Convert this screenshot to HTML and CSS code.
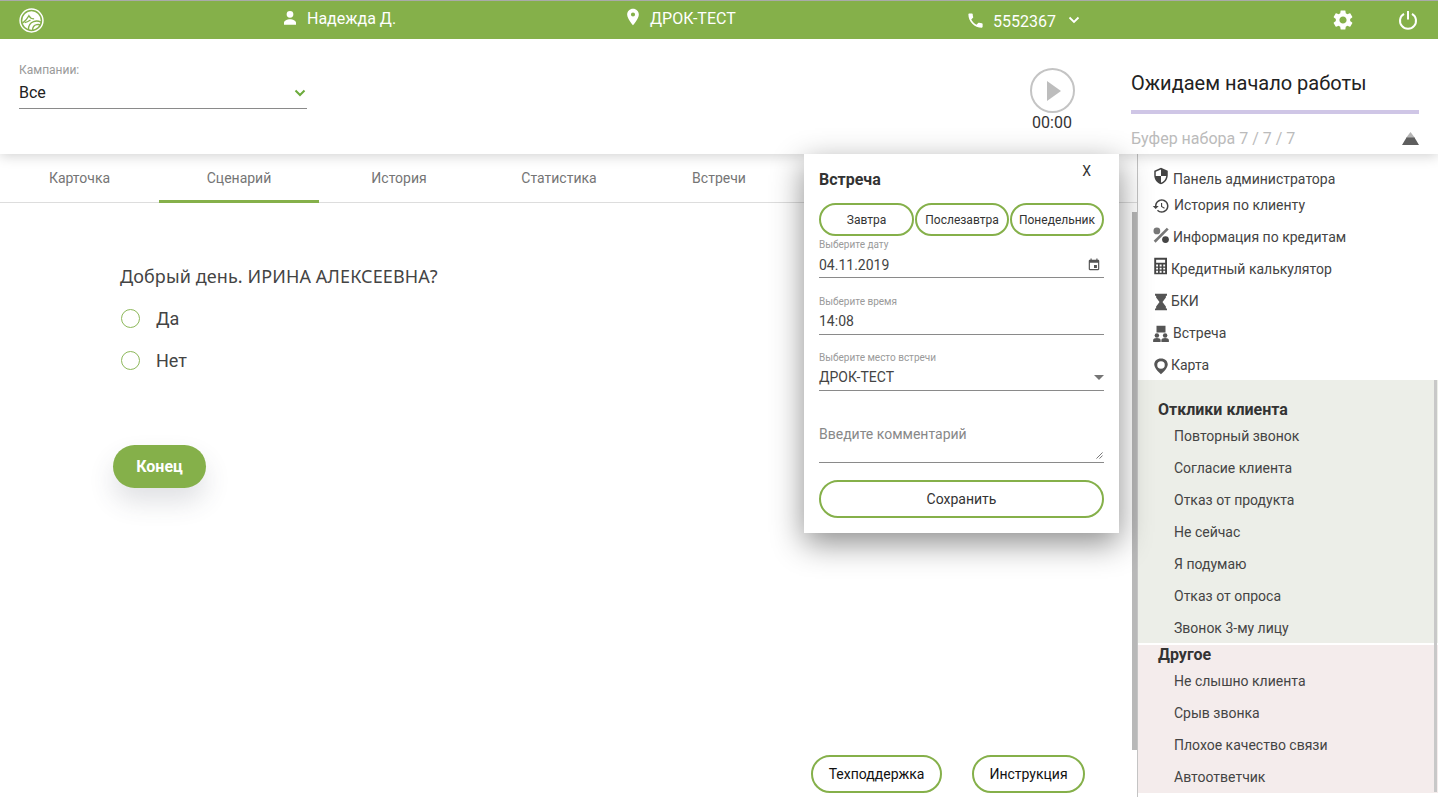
FILE: index.html
```html
<!DOCTYPE html>
<html lang="ru">
<head>
  <meta charset="UTF-8" />
  <title>Встреча</title>
  <link rel="stylesheet" href="styles.css">
</head>
<body>
  <header class="topbar">
    <div class="topbar-cell logo-cell">
      <svg class="logo" viewBox="0 0 24 24">
        <circle cx="12" cy="12" r="11" fill="none" stroke="#fff" stroke-width="1.4"/>
        <circle cx="12" cy="12" r="8.8" fill="#fff"/>
        <path d="M3.500 14.500c3-2.500 5-5 6-7 1 2 3 3 5 3M9 21c0-4 2-7 5-8 2.500-.8 5-.5 7 .5M13 21.500c0-3 1.500-5 4-5.500 1.500-.3 3 0 3.500.8M11 11.500c-1.500 1-3 2-5.500 2.500" fill="none" stroke="#85b04a" stroke-width="1.300"/>
      </svg>
    </div>
    <div class="topbar-cell user-cell">
      <svg class="top-icon" viewBox="0 0 24 24"><path d="M12 11.500a4.500 4.500 0 1 0 0-9 4.500 4.500 0 0 0 0 9zm0 2c-3.500 0-8 1.800-8 4.500v3h16v-3c0-2.700-4.500-4.500-8-4.500z"/></svg>
      <span>Надежда Д.</span>
    </div>
    <div class="topbar-cell place-cell">
      <svg class="top-icon" viewBox="0 0 24 24"><path d="M12 2C8.130 2 5 5.130 5 9c0 5.250 7 13 7 13s7-7.750 7-13c0-3.870-3.130-7-7-7zm0 9.500a2.500 2.500 0 0 1 0-5 2.500 2.500 0 0 1 0 5z"/></svg>
      <span>ДРОК-ТЕСТ</span>
    </div>
    <div class="topbar-cell phone-cell">
      <svg class="top-icon" viewBox="0 0 24 24"><path d="M6.620 10.790c1.440 2.830 3.760 5.140 6.590 6.590l2.200-2.200c.27-.27.67-.36 1.020-.24 1.120.37 2.330.57 3.570.57.55 0 1 .45 1 1V20c0 .55-.45 1-1 1-9.390 0-17-7.610-17-17 0-.55.45-1 1-1h3.500c.55 0 1 .45 1 1 0 1.250.2 2.450.57 3.570.11.35.03.74-.25 1.020l-2.200 2.200z"/></svg>
      <span class="phone-num">5552367</span>
      <svg class="phone-arrow" viewBox="0 0 12 8"><path d="M1.500 1.500L6 6l4.500-4.500" fill="none" stroke="#fff" stroke-width="1.800"/></svg>
    </div>
    <div class="topbar-cell">
      <svg class="gear" viewBox="0 0 24 24"><path d="M19.140 12.940c.04-.3.06-.61.06-.94 0-.32-.02-.64-.07-.94l2.030-1.580c.18-.14.23-.41.12-.61l-1.920-3.320c-.12-.22-.37-.29-.59-.22l-2.390.96c-.5-.38-1.030-.7-1.620-.94l-.36-2.540c-.04-.24-.24-.41-.48-.41h-3.840c-.24 0-.43.17-.47.41l-.36 2.540c-.59.24-1.130.57-1.620.94l-2.390-.96c-.22-.08-.47 0-.59.22L2.740 8.870c-.12.21-.08.47.12.61l2.030 1.580c-.05.3-.09.63-.09.94s.02.64.07.94l-2.030 1.580c-.18.14-.23.41-.12.61l1.920 3.320c.12.22.37.29.59.22l2.390-.96c.5.38 1.030.7 1.620.94l.36 2.540c.05.24.24.41.48.41h3.840c.24 0 .44-.17.47-.41l.36-2.540c.59-.24 1.130-.56 1.620-.94l2.390.96c.22.08.47 0 .59-.22l1.920-3.320c.12-.22.07-.47-.12-.61l-2.010-1.580zM12 15.600c-1.980 0-3.600-1.620-3.600-3.600s1.620-3.600 3.600-3.600 3.600 1.620 3.600 3.600-1.620 3.600-3.600 3.600z"/></svg>
    </div>
    <div class="topbar-cell">
      <svg class="power" viewBox="0 0 20 20"><path d="M6 3.800a8 8 0 1 0 8 0M10 1v8.500" fill="none" stroke="#fff" stroke-width="2"/></svg>
    </div>
  </header>

  <section class="subbar">
    <div class="campaign">
      <div class="campaign-label">Кампании:</div>
      <div class="campaign-select">
        <span>Все</span>
        <svg class="campaign-arrow" viewBox="0 0 12 8"><path d="M1.500 1.500L6 6l4.500-4.500" fill="none" stroke="#6cab3c" stroke-width="2"/></svg>
      </div>
    </div>
    <div class="timer">
      <div class="play"><div class="play-triangle"></div></div>
      <div class="timer-value">00:00</div>
    </div>
    <div class="status">
      <div class="status-title">Ожидаем начало работы</div>
      <div class="status-bar"></div>
      <div class="status-buffer">
        <span>Буфер набора 7 / 7 / 7</span>
        <svg class="buffer-arrow" viewBox="0 0 17 13"><path fill="#b5b5b5" d="M8.500 0L13 6H4z"/><path fill="#5e5e5e" d="M4.500 5.500h8L17 13H0z"/></svg>
      </div>
    </div>
  </section>

  <main class="main">
    <div class="left">
      <nav class="tabs">
        <div class="tab">Карточка</div>
        <div class="tab active">Сценарий</div>
        <div class="tab">История</div>
        <div class="tab">Статистика</div>
        <div class="tab">Встречи</div>
      </nav>
      <div class="script">
        <div class="question">Добрый день. ИРИНА АЛЕКСЕЕВНА?</div>
        <div class="option"><span class="radio"></span><span>Да</span></div>
        <div class="option"><span class="radio"></span><span>Нет</span></div>
        <button class="end-btn">Конец</button>
      </div>
      <div class="bottom-btns">
        <button class="outline-btn">Техподдержка</button>
        <button class="outline-btn">Инструкция</button>
      </div>
      <div class="left-scroll"></div>
    </div>

    <aside class="side">
      <ul class="tools">
        <li class="tool tool-first">
          <svg class="tool-icon icon-up" viewBox="0 0 24 24"><path d="M12 1L3 5v6c0 5.550 3.840 10.740 9 12 5.160-1.260 9-6.450 9-12V5l-9-4zm0 10.990h7c-.53 4.120-3.280 7.790-7 8.940V12H5V6.300l7-3.110v8.800z"/></svg>
          <span>Панель администратора</span>
        </li>
        <li class="tool tool-second">
          <svg class="tool-icon icon-down" viewBox="0 0 24 24"><path d="M13 3c-4.970 0-9 4.030-9 9H1l3.890 3.890.07.14L9 12H6c0-3.870 3.130-7 7-7s7 3.130 7 7-3.130 7-7 7c-1.930 0-3.680-.79-4.940-2.060l-1.420 1.420C8.270 19.990 10.510 21 13 21c4.970 0 9-4.030 9-9s-4.030-9-9-9zm-1 5v5l4.280 2.540.72-1.210-3.500-2.080V8H12z"/></svg>
          <span>История по клиенту</span>
        </li>
        <li class="tool">
          <svg class="tool-icon icon-up-small" viewBox="0 0 24 24"><circle cx="6.500" cy="6.500" r="4.500" fill="#777"/><circle cx="18" cy="18" r="4.500"/><path d="M3.500 21L21 3.500" stroke="#777" stroke-width="3.500" fill="none"/></svg>
          <span>Информация по кредитам</span>
        </li>
        <li class="tool tool-tight">
          <svg class="tool-icon icon-up" viewBox="0 0 24 24"><path fill-rule="evenodd" d="M3 1h17v22H3zM5.500 3.500v4h12v-4zM5.500 10v2.500H8V10zM10.200 10v2.500h2.600V10zM15 10v2.500h2.500V10zM5.500 14.200v2.500H8v-2.500zM10.200 14.200v2.500h2.600v-2.500zM15 14.200v2.500h2.500v-2.500zM5.500 18.400v2.500H8v-2.500zM10.200 18.400v2.500h2.600v-2.500zM15 18.400v2.500h2.500v-2.500z"/></svg>
          <span>Кредитный калькулятор</span>
        </li>
        <li class="tool tool-tight">
          <svg class="tool-icon icon-down icon-grey" viewBox="0 0 24 24"><path d="M4 1h16v2.500h-1.500v2.500L14 12l4.500 6v2.500H20V23H4v-2.500h1.500V18L10 12 5.500 6V3.500H4z"/></svg>
          <span>БКИ</span>
        </li>
        <li class="tool">
          <svg class="tool-icon icon-down icon-grey" viewBox="0 0 24 24"><path d="M6 1h12v9H6z"/><circle cx="6.500" cy="14" r="3"/><circle cx="17.500" cy="14" r="3"/><path d="M1.500 22.500v-2.500c0-1.500 2-2.700 5-2.700s5 1.200 5 2.700v2.500zM12.500 22.500v-2.500c0-1.500 2-2.700 5-2.700s5 1.200 5 2.700v2.500z"/></svg>
          <span>Встреча</span>
        </li>
        <li class="tool tool-tight">
          <svg class="tool-icon icon-down icon-grey" viewBox="0 0 24 24"><path fill-rule="evenodd" d="M12 2C6.500 2 3 5.500 3 10c0 5.500 9 13 9 13s9-7.500 9-13c0-4.500-3.500-8-9-8zm0 3.500a5 5 0 1 1 0 10 5 5 0 0 1 0-10z"/></svg>
          <span>Карта</span>
        </li>
      </ul>

      <section class="group group-green">
        <h3 class="group-title">Отклики клиента</h3>
        <div class="group-item">Повторный звонок</div>
        <div class="group-item">Согласие клиента</div>
        <div class="group-item">Отказ от продукта</div>
        <div class="group-item">Не сейчас</div>
        <div class="group-item">Я подумаю</div>
        <div class="group-item">Отказ от опроса</div>
        <div class="group-item">Звонок 3-му лицу</div>
      </section>
      <section class="group group-pink">
        <h3 class="group-title">Другое</h3>
        <div class="group-item">Не слышно клиента</div>
        <div class="group-item">Срыв звонка</div>
        <div class="group-item">Плохое качество связи</div>
        <div class="group-item">Автоответчик</div>
      </section>
      <div class="side-scroll"></div>
    </aside>
  </main>

  <div class="modal">
    <div class="modal-close">X</div>
    <h2 class="modal-title">Встреча</h2>
    <div class="quick-btns">
      <button class="quick-btn">Завтра</button>
      <button class="quick-btn">Послезавтра</button>
      <button class="quick-btn">Понедельник</button>
    </div>
    <div class="field field-date">
      <div class="field-label">Выберите дату</div>
      <div class="field-value">
        <span>04.11.2019</span>
        <svg class="field-icon" viewBox="0 0 24 24"><path d="M17 12h-5v5h5v-5zM16 1v2H8V1H6v2H5c-1.110 0-1.990.9-1.990 2L3 19c0 1.100.89 2 2 2h14c1.100 0 2-.9 2-2V5c0-1.100-.9-2-2-2h-1V1h-2zm3 18H5V8h14v11z"/></svg>
      </div>
    </div>
    <div class="field field-time">
      <div class="field-label">Выберите время</div>
      <div class="field-value"><span>14:08</span></div>
    </div>
    <div class="field">
      <div class="field-label">Выберите место встречи</div>
      <div class="field-value">
        <span>ДРОК-ТЕСТ</span>
        <span class="select-caret"></span>
      </div>
    </div>
    <div class="comment">
      <span>Введите комментарий</span>
      <svg class="resize-handle" viewBox="0 0 8 8"><path d="M7.500.5L.5 7.500M7.500 4L4 7.500" stroke="#666" stroke-width="1" fill="none"/></svg>
    </div>
    <button class="save-btn">Сохранить</button>
  </div>
</body>
</html>
```

FILE: styles.css
```css
html, body {
  margin: 0;
  height: 100%;
  overflow: hidden;
}

body {
  font-family: Roboto, sans-serif;
  color: #333;
  background: #fff;
  position: relative;
}

button {
  font-family: Roboto, sans-serif;
  background: #fff;
  cursor: pointer;
}

/* top green bar */
.topbar {
  height: 38px;
  border-top: 1px solid #aaa;
  background: #85b04a;
  color: #fff;
  display: grid;
  grid-template-columns: 283px 344px 341px 365px 65px 40px;
  font-size: 16px;
  position: relative;
  z-index: 3;
}

.topbar-cell {
  display: flex;
  align-items: center;
}

.logo-cell {
  padding-left: 19px;
}

.logo {
  width: 25px;
  height: 25px;
}

.top-icon {
  width: 18px;
  height: 18px;
  fill: #fff;
  margin: 0 8px 0 -2px;
}

.user-cell {
  padding-bottom: 4px;
}

.place-cell {
  padding-bottom: 4px;
}

.place-cell .top-icon {
  width: 20px;
  height: 20px;
  margin: -2px 7px 0 -4px;
}

.phone-cell .top-icon {
  width: 19px;
  height: 19px;
  margin: 0 8px 0 -2px;
}

.phone-num {
  padding-top: 2px;
}

.phone-arrow {
  width: 12px;
  height: 8px;
  margin-left: 12px;
}

.gear {
  width: 24px;
  height: 24px;
  fill: #fff;
  margin-left: -2px;
}

.power {
  width: 20px;
  height: 20px;
}

/* campaign, timer, status */
.subbar {
  height: 115px;
  background: #fff;
  display: grid;
  grid-template-columns: 1119px 319px;
  box-shadow: 0 2px 12px rgba(0,0,0,0.18);
  position: relative;
  z-index: 2;
}

.campaign {
  position: absolute;
  left: 19px;
  top: 24px;
  width: 288px;
}

.campaign-label {
  font-size: 12px;
  color: #9a9a9a;
  line-height: 14px;
}

.campaign-select {
  display: flex;
  justify-content: space-between;
  align-items: center;
  height: 31px;
  font-size: 16px;
  color: #222;
  border-bottom: 1px solid #8a8a8a;
}

.campaign-arrow {
  width: 12px;
  height: 8px;
  margin-right: 1px;
}

.timer {
  grid-column: 1;
  justify-self: end;
  margin-right: 27px;
  padding-top: 29px;
  display: flex;
  flex-direction: column;
  align-items: center;
  width: 80px;
}

.play {
  width: 41px;
  height: 41px;
  border: 2px solid #c4c4c4;
  border-radius: 50%;
  display: flex;
  align-items: center;
  justify-content: center;
}

.play-triangle {
  width: 0;
  height: 0;
  margin-left: 4px;
  border-left: 14px solid #bdbdbd;
  border-top: 10px solid transparent;
  border-bottom: 10px solid transparent;
}

.timer-value {
  font-size: 16px;
  color: #333;
  line-height: 19px;
}

.status {
  grid-column: 2;
  padding: 31px 19px 0 12px;
  background: #fff;
  position: relative;
  z-index: 6;
}

.status-title {
  font-size: 20px;
  line-height: 26px;
  color: #222;
}

.status-bar {
  height: 4px;
  background: #cfc6e6;
  margin-top: 14px;
}

.status-buffer {
  display: flex;
  justify-content: space-between;
  align-items: center;
  margin-top: 15px;
  font-size: 16px;
  color: #bbb;
}

.buffer-arrow {
  width: 17px;
  height: 13px;
}

/* main area */
.main {
  display: flex;
  height: 643px;
}

.left {
  width: 1137px;
  display: flex;
  flex-direction: column;
  position: relative;
}

.tabs {
  display: flex;
  height: 48px;
  border-bottom: 1px solid #ddd;
}

.tab {
  width: 160px;
  box-sizing: border-box;
  text-align: center;
  font-size: 14px;
  line-height: 48px;
  color: #757575;
}

.tab:first-child {
  width: 159px;
}

.tab.active {
  height: 49px;
  border-bottom: 3px solid #85b04a;
}

.script {
  flex: 1;
  padding: 61px 0 0 120px;
}

.question {
  font-family: "Noto Sans", sans-serif;
  font-size: 18px;
  letter-spacing: 0.1px;
  line-height: 24px;
  color: #444;
  margin-bottom: 20px;
}

.option {
  display: flex;
  align-items: center;
  height: 20px;
  margin-bottom: 22px;
  font-size: 18px;
  color: #444;
  padding-left: 1px;
}

.radio {
  width: 17px;
  height: 17px;
  border: 1px solid #8db85a;
  border-radius: 50%;
  margin-right: 16px;
}

.end-btn {
  display: block;
  width: 93px;
  height: 43px;
  margin: 75px 0 0 -7px;
  border: none;
  border-radius: 22px;
  background: #85b04a;
  color: #fff;
  font-size: 16px;
  font-weight: 700;
  box-shadow: 0 14px 26px rgba(60,70,90,0.16);
}

.bottom-btns {
  display: flex;
  justify-content: flex-end;
  gap: 30px;
  padding: 0 52px 4px 0;
}

.outline-btn {
  height: 38px;
  width: 131px;
  padding: 0;
  border: 2px solid #85b04a;
  border-radius: 19px;
  font-size: 14px;
  font-weight: 400;
  color: #111;
}

.outline-btn:last-child {
  width: 113px;
}

.left-scroll {
  position: absolute;
  right: 0;
  top: 58px;
  width: 5px;
  height: 538px;
  background: #b8b8b8;
}

/* right column */
.side {
  flex: 1;
  border-left: 1px solid #c4c4c4;
  position: relative;
  font-size: 14px;
  color: #444;
}

.tools {
  list-style: none;
  margin: 0;
  padding: 0 0 0 15px;
  height: 226px;
}

.tool {
  display: flex;
  align-items: center;
  height: 32px;
  gap: 3px;
}

.tool-first {
  height: 26px;
  padding-top: 12px;
}

.tool-second {
  height: 26px;
  margin-bottom: 3px;
  margin-top: -12px;
  padding-top: 12px;
  gap: 4px;
}

.tool-tight {
  gap: 1px;
}

.tool-icon {
  width: 18px;
  height: 18px;
  fill: #444;
  flex-shrink: 0;
  margin-left: -1px;
}

.icon-grey {
  fill: #555;
}

.icon-up {
  margin-top: -6px;
}

.icon-up-small {
  margin-top: -4px;
}

.icon-down {
  margin-top: 2px;
}

.group-title {
  margin: 0;
  font-size: 16px;
  font-weight: 700;
  color: #333;
  padding-left: 20px;
}

.group-item {
  height: 32px;
  line-height: 32px;
  padding-left: 36px;
}

.group-green {
  background: #eceee8;
  height: 263px;
  padding-top: 19px;
  box-sizing: border-box;
  margin-bottom: 2px;
}

.group-green .group-title {
  line-height: 22px;
}

.group-green .group-item:first-of-type {
  margin-top: -1px;
}

.group-pink {
  background: #f4ecec;
  height: 148px;
  padding-top: 1px;
  box-sizing: border-box;
}

.group-pink .group-title {
  line-height: 18px;
  margin-bottom: 1px;
}

.side-scroll {
  position: absolute;
  right: 1px;
  top: 226px;
  width: 3px;
  height: 412px;
  background: #c8c8c8;
}

/* meeting popup */
.modal {
  position: absolute;
  left: 804px;
  top: 154px;
  width: 315px;
  height: 379px;
  box-sizing: border-box;
  padding: 15px 15px 0;
  background: #fff;
  box-shadow: 0 10px 30px rgba(0,0,0,0.45);
  z-index: 5;
}

.modal-close {
  position: absolute;
  right: 28px;
  top: 9px;
  font-size: 14px;
  color: #333;
}

.modal-title {
  margin: 0 0 12px;
  font-size: 16px;
  font-weight: 700;
  line-height: 22px;
  color: #333;
}

.quick-btns {
  display: flex;
  gap: 1px;
}

.quick-btn {
  width: 94px;
  height: 33px;
  padding: 0;
  border: 2px solid #85b04a;
  border-radius: 17px;
  font-size: 12px;
  color: #333;
}

.quick-btn:first-child {
  width: 95px;
}

.field {
  margin-bottom: 17px;
}

.field-date {
  margin-top: 3px;
  margin-bottom: 18px;
}

.field-date .field-value {
  height: 24px;
  padding-top: 2px;
}

.field-time .field-label {
  margin-top: 1px;
}

.field-label {
  font-size: 10px;
  line-height: 12px;
  color: #9a9a9a;
}

.field-value {
  display: flex;
  justify-content: space-between;
  align-items: center;
  height: 26px;
  font-size: 14px;
  color: #444;
  border-bottom: 1px solid #8a8a8a;
}

.field-icon {
  width: 14px;
  height: 14px;
  fill: #555;
  margin-right: 3px;
}

.select-caret {
  width: 0;
  height: 0;
  border-left: 5px solid transparent;
  border-right: 5px solid transparent;
  border-top: 5px solid #757575;
}

.comment {
  height: 51px;
  margin-top: 21px;
  box-sizing: border-box;
  padding-top: 12px;
  font-size: 14px;
  line-height: 20px;
  color: #888;
  border-bottom: 1px solid #8a8a8a;
  position: relative;
}

.resize-handle {
  position: absolute;
  right: 1px;
  bottom: 3px;
  width: 7px;
  height: 7px;
}

.save-btn {
  display: block;
  width: 100%;
  height: 38px;
  margin-top: 17px;
  border: 2px solid #85b04a;
  border-radius: 19px;
  font-size: 14px;
  font-weight: 400;
  color: #333;
}
```
